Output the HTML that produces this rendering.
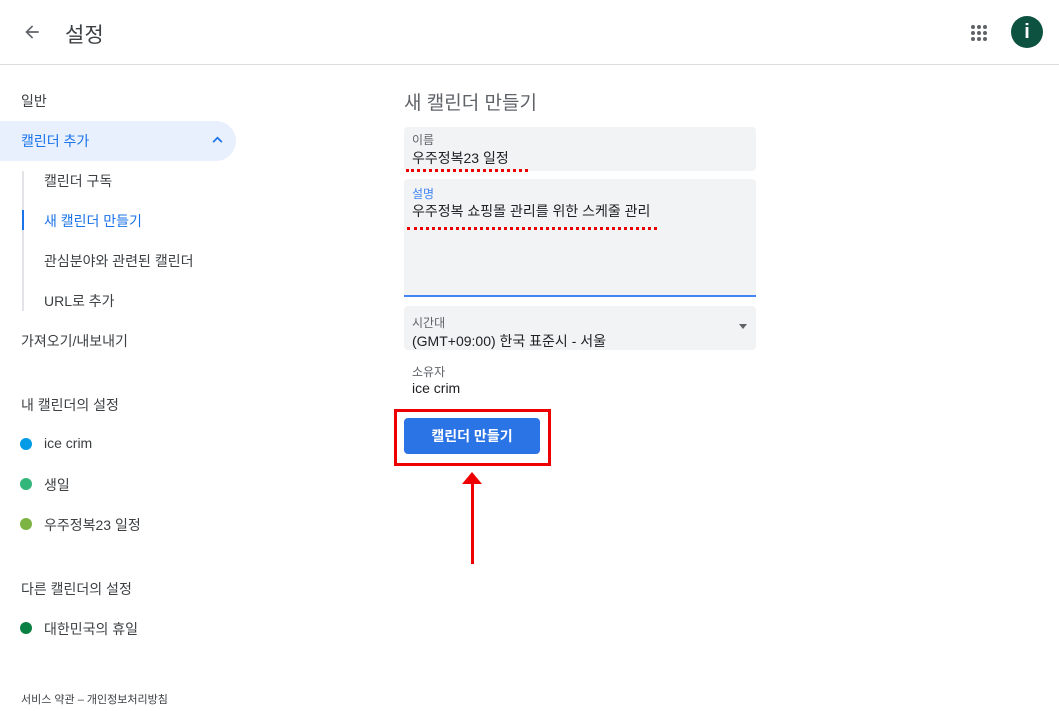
<!DOCTYPE html>
<html><head><meta charset="utf-8"><style>
*{margin:0;padding:0;box-sizing:border-box}
body{width:1059px;height:711px;overflow:hidden;background:#fff;font-family:"Liberation Sans","Noto Sans CJK KR",sans-serif;color:#3c4043;position:relative}
.a{position:absolute;white-space:nowrap}
.f{font-size:14px}
.dot{position:absolute;width:12px;height:12px;border-radius:50%}
.box{position:absolute;background:#f1f3f4;border-radius:4px}
.dash{position:absolute;border-top:3px dotted #e00}
</style></head><body>
<svg class="a" style="left:22px;top:22px" width="20" height="20" viewBox="0 0 24 24"><path d="M20 11H7.83l5.59-5.59L12 4l-8 8 8 8 1.41-1.41L7.83 13H20v-2z" fill="#5f6368"/></svg>
<div class="a" style="left:65px;top:19px;font-size:21px;color:#3c4043">설정</div>
<svg class="a" style="left:970px;top:24px" width="18" height="18" viewBox="0 0 18 18" fill="#5f6368"><circle cx="3" cy="3" r="2"/><circle cx="9" cy="3" r="2"/><circle cx="15" cy="3" r="2"/><circle cx="3" cy="9" r="2"/><circle cx="9" cy="9" r="2"/><circle cx="15" cy="9" r="2"/><circle cx="3" cy="15" r="2"/><circle cx="9" cy="15" r="2"/><circle cx="15" cy="15" r="2"/></svg>
<div class="a" style="left:1011px;top:16px;width:32px;height:32px;border-radius:50%;background:#0d5241;color:#fff;font-size:20px;font-weight:bold;text-align:center;line-height:32px">i</div>
<div class="a" style="left:0;top:64px;width:1059px;border-top:1px solid #dadce0"></div>

<div class="a f" style="left:21px;top:91px">일반</div>
<div class="a" style="left:0;top:121px;width:236px;height:40px;background:#e8f0fe;border-radius:0 20px 20px 0"></div>
<div class="a f" style="left:21px;top:131px;color:#1a73e8">캘린더 추가</div>
<svg class="a" style="left:212px;top:136px" width="11" height="7" viewBox="0 0 12 8"><path d="M1 7l5-5 5 5" stroke="#1a73e8" stroke-width="2" fill="none"/></svg>
<div class="a" style="left:22px;top:171px;width:2px;height:140px;background:#e4e4e8"></div>
<div class="a" style="left:22px;top:210px;width:2px;height:20px;background:#1a73e8"></div>
<div class="a f" style="left:44px;top:171px">캘린더 구독</div>
<div class="a f" style="left:44px;top:211px;color:#1a73e8">새 캘린더 만들기</div>
<div class="a f" style="left:44px;top:251px">관심분야와 관련된 캘린더</div>
<div class="a f" style="left:44px;top:291px">URL로 추가</div>
<div class="a f" style="left:21px;top:331px">가져오기/내보내기</div>
<div class="a f" style="left:21px;top:395px">내 캘린더의 설정</div>
<div class="dot" style="left:20px;top:438px;background:#039be5"></div><div class="a f" style="left:44px;top:435px">ice crim</div>
<div class="dot" style="left:20px;top:478px;background:#33b679"></div><div class="a f" style="left:44px;top:475px">생일</div>
<div class="dot" style="left:20px;top:518px;background:#7cb342"></div><div class="a f" style="left:44px;top:515px">우주정복23 일정</div>
<div class="a f" style="left:21px;top:579px">다른 캘린더의 설정</div>
<div class="dot" style="left:20px;top:622px;background:#0b8043"></div><div class="a f" style="left:44px;top:619px">대한민국의 휴일</div>
<div class="a" style="left:21px;top:691px;font-size:11px">서비스 약관 – 개인정보처리방침</div>

<div class="a" style="left:404px;top:88px;font-size:19px;color:#5f6368">새 캘린더 만들기</div>
<div class="box" style="left:404px;top:127px;width:352px;height:44px"></div>
<div class="a" style="left:412px;top:131px;font-size:12px;color:#5f6368">이름</div>
<div class="a f" style="left:412px;top:148px;color:#202124">우주정복23 일정</div>
<div class="dash" style="left:406px;top:169px;width:122px"></div>
<div class="box" style="left:404px;top:179px;width:352px;height:118px;border-radius:4px 4px 0 0;border-bottom:2px solid #4285f4"></div>
<div class="a" style="left:412px;top:185px;font-size:12px;color:#4285f4">설명</div>
<div class="a f" style="left:412px;top:201px;color:#202124">우주정복 쇼핑몰 관리를 위한 스케줄 관리</div>
<div class="dash" style="left:407px;top:227px;width:250px"></div>
<div class="box" style="left:404px;top:306px;width:352px;height:44px"></div>
<div class="a" style="left:412px;top:314px;font-size:12px;color:#5f6368">시간대</div>
<div class="a f" style="left:412px;top:331px;color:#202124">(GMT+09:00) 한국 표준시 - 서울</div>
<div class="a" style="left:739px;top:324px;border:4px solid transparent;border-top:5px solid #5f6368"></div>
<div class="a" style="left:412px;top:363px;font-size:12px;color:#5f6368">소유자</div>
<div class="a f" style="left:412px;top:380px;color:#202124">ice crim</div>
<div class="a" style="left:394px;top:409px;width:157px;height:57px;border:3px solid #e00"></div>
<div class="a" style="left:404px;top:418px;width:136px;height:36px;background:#2b74e5;border-radius:4px;color:#fff;font-size:14px;font-weight:bold;text-align:center;line-height:36px">캘린더 만들기</div>
<div class="a" style="left:471px;top:482px;width:3px;height:82px;background:#e00"></div>
<div class="a" style="left:462px;top:472px;border:10px solid transparent;border-bottom:12px solid #e00;border-top:0"></div>
</body></html>
